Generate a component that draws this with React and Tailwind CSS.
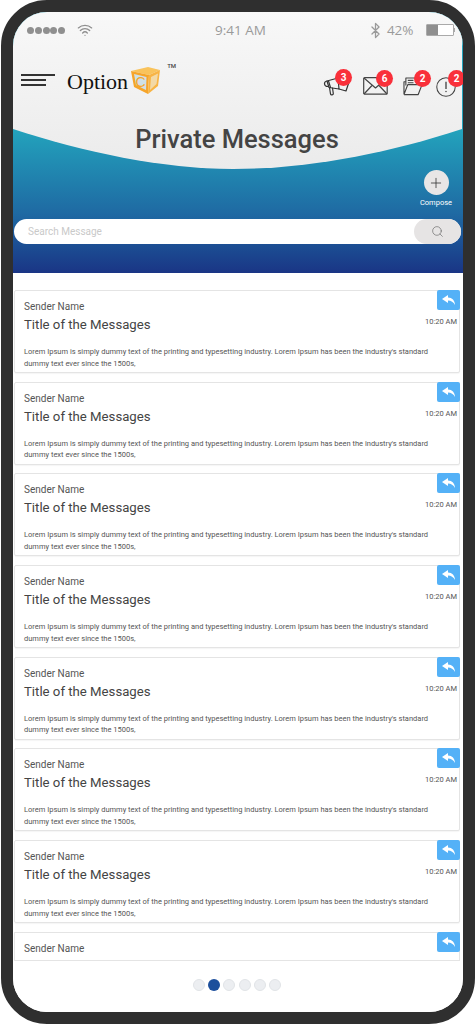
import React from 'react';
import { Search, Plus, Bluetooth, Wifi } from 'lucide-react';

const Badge = ({ n, className }) => (
  <span className={`absolute flex h-[17px] w-[17px] items-center justify-center rounded-full bg-[#f9303a] text-[10px] font-bold leading-none text-white ${className}`}>
    {n}
  </span>
);

const Cube = () => (
  <svg width="30" height="28" viewBox="0 0 30 28">
    <path d="M0 4 L17 0 L29 3 L18 8 Z" fill="#f9c35c" />
    <path d="M0 4 L18 8 L17 27 L3 20 Z" fill="#f6a52a" />
    <path d="M18 8 L29 3 L27 19 L17 27 Z" fill="#f8b444" />
    <path d="M3 7 L15.5 10 L15 23 L5 18 Z" fill="#cfe0e6" />
    <path d="M20 10 L27 6.5 L25.5 17 L19 23 Z" fill="#f3d9a6" />
    <text x="4.5" y="20" fontSize="14" fontFamily="Liberation Sans, sans-serif" fill="#f6a52a">C</text>
  </svg>
);

const Megaphone = () => (
  <svg width="28" height="24" viewBox="0 0 28 24" fill="none" stroke="#333" strokeWidth="1.2" strokeLinejoin="round" strokeLinecap="round">
    <path d="M4 7 L15 4 L16 15 L6 13.5 Z" />
    <path d="M4 7 C0.5 7.5 0.5 12.5 5 12.5" />
    <path d="M6.500 13.5 L7.500 20 C8 21.500 10.500 21 10.300 19.500 L9.500 14" />
    <path d="M16 15 L23 17 L26 8" />
    <path d="M5.500 7 L7.500 13.5" />
  </svg>
);

const Envelope = () => (
  <svg width="25" height="18" viewBox="0 0 25 18" fill="none" stroke="#444" strokeWidth="1.2" strokeLinejoin="round">
    <rect x="0.7" y="0.7" width="23.5" height="16.5" rx="1" />
    <path d="M1 1 L12.5 11 L24 1" />
    <path d="M1 17 L9 8.5 M24 17 L16 8.5" />
  </svg>
);

const Folder = () => (
  <svg width="20" height="19" viewBox="0 0 21 20" fill="none" stroke="#444" strokeWidth="1.2" strokeLinejoin="round">
    <path d="M3 9 V1 H14 V6" />
    <path d="M5 3.5 H11 M5 6 H11" />
    <path d="M1 18.5 V5 H3 M1 18.5 H16 L20 8 H5 L1 18.5" />
  </svg>
);

const Alert = () => (
  <svg width="20" height="20" viewBox="0 0 21 21" fill="none" stroke="#444" strokeWidth="1.1">
    <circle cx="10.5" cy="10.5" r="9.7" />
    <path d="M10.5 5 V12.5" strokeWidth="1.4" />
    <circle cx="10.5" cy="15.3" r="0.8" fill="#444" stroke="none" />
  </svg>
);

const MessageCard = ({ clipped }) => (
  <div className={`relative shrink-0 border border-[#e4e4e4] bg-white pl-[9px] pr-[24px] pt-[9px] ${clipped ? 'h-[29px] overflow-visible' : 'h-[83px] rounded-[2px] shadow-[0_1px_1px_rgba(0,0,0,0.04)]'}`}>
    <button className="absolute right-[-1px] top-[-1px] flex h-[20px] w-[23px] items-center justify-center rounded-[2px] bg-[#54b1f7]">
      <svg width="14" height="10" viewBox="0 0 14 10" fill="#fff">
        <path d="M6 0 L0 4 L6 8 V5.5 C9 5.5 11.5 7 13 10 C13 5.5 10 2.5 6 2.5 Z" />
      </svg>
    </button>
    <div className="text-[10px] leading-[13px] text-[#555]">Sender Name</div>
    {!clipped && (
      <>
        <div className="mt-[3px] flex items-start justify-between">
          <span className="text-[13.2px] leading-[18px] text-[#444]">Title of the Messages</span>
          <span className="mr-[-22px] mt-[1px] text-[7.5px] leading-[10px] text-[#555]">10:20 AM</span>
        </div>
        <p className="mt-[12px] text-[7.5px] leading-[11.5px] text-[#555]">
          Lorem Ipsum is simply dummy text of the printing and typesetting industry. Lorem Ipsum has been the industry's standard dummy text ever since the 1500s,
        </p>
      </>
    )}
  </div>
);

export default function App() {
  return (
    <div className="h-[1024px] w-[475px] overflow-hidden bg-white font-['Roboto',sans-serif]">
      <div className="ml-[1px] flex h-[1024px] w-[474px] flex-col overflow-hidden rounded-[46px] border-[12.5px] border-[#2f2f2f]">
        <header className="relative h-[261px] shrink-0 bg-gradient-to-b from-[#23a3bc] from-45% via-[#1f6aa3] via-77% to-[#1a3585]">
          <svg className="absolute inset-x-0 top-0" width="449" height="158" viewBox="0 0 449 158" preserveAspectRatio="none">
            <defs>
              <linearGradient id="top" x1="0" y1="0" x2="0" y2="1">
                <stop offset="0" stopColor="#f8f8f8" />
                <stop offset="1" stopColor="#ebebeb" />
              </linearGradient>
            </defs>
            <path d="M0 0 H449 V117 C370 143 290 157 220 157 C150 157 70 140 0 117 Z" fill="url(#top)" />
          </svg>

          <div className="relative flex h-[36px] items-center justify-between pl-[14px] pr-[8px] text-[14px] text-[#9a9a9a]">
            <div className="flex items-center gap-[12px]">
              <div className="flex gap-[0.8px]">
                <i className="h-[7px] w-[7px] rounded-full bg-[#8f8f8f]" />
                <i className="h-[7px] w-[7px] rounded-full bg-[#8f8f8f]" />
                <i className="h-[7px] w-[7px] rounded-full bg-[#8f8f8f]" />
                <i className="h-[7px] w-[7px] rounded-full bg-[#8f8f8f]" />
                <i className="h-[7px] w-[7px] rounded-full bg-[#8f8f8f]" />
              </div>
              <Wifi size={16} strokeWidth={2} className="text-[#8f8f8f]" />
            </div>
            <span className="absolute left-[202px] font-['Open_Sans',sans-serif] text-[13.5px]">9:41 AM</span>
            <div className="flex items-center gap-[3px]">
              <Bluetooth size={17} strokeWidth={1.8} />
              <span className="mr-[9px] font-['Open_Sans',sans-serif] text-[13.5px]">42%</span>
              <div className="flex items-center">
                <div className="flex h-[12px] w-[28px] rounded-[1px] border border-[#aaa] bg-white">
                  <div className="w-[11px] bg-[#8f8f8f]" />
                </div>
                <div className="h-[4px] w-[1.5px] bg-[#aaa]" />
              </div>
            </div>
          </div>

          <div className="relative mt-[16px] flex h-[59px] items-start pl-[8px]">
            <div className="mt-[10px] flex w-[34px] flex-col gap-[3.5px]">
              <i className="h-[1.5px] w-[34px] bg-[#333]" />
              <i className="h-[1.5px] w-[25px] bg-[#333]" />
              <i className="h-[1.5px] w-[25px] bg-[#333]" />
            </div>
            <span className="ml-[12px] mt-[5px] font-['Liberation_Serif',serif] text-[22px] leading-[26px] text-[#111]">Option</span>
            <span className="ml-[3px] mt-[3px]"><Cube /></span>
            <span className="ml-[6px] mt-[-3px] text-[6px] font-medium text-[#444]">TM</span>

            <div className="absolute right-[2px] top-[9px] flex items-start">
              <div className="relative mt-[1px] h-[26px] w-[40px]">
                <Megaphone />
                <Badge n="3" className="left-[12px] top-[-5px]" />
              </div>
              <div className="relative mt-[4px] h-[20px] w-[40px]">
                <Envelope />
                <Badge n="6" className="left-[13px] top-[-7px]" />
              </div>
              <div className="relative mt-[4px] h-[20px] w-[33px]">
                <Folder />
                <Badge n="2" className="left-[11px] top-[-7px]" />
              </div>
              <div className="relative mt-[4px] h-[20px] w-[25px]">
                <Alert />
                <Badge n="2" className="left-[12px] top-[-7px]" />
              </div>
            </div>
          </div>

          <h1 className="relative mt-[-1px] pr-[2px] text-center text-[25.5px] font-medium leading-[34px] text-[#444]">Private Messages</h1>

          <div className="relative mt-[14px] flex justify-end pr-[10px]">
            <div className="flex w-[34px] flex-col items-center">
              <div className="flex h-[25px] w-[25px] items-center justify-center rounded-full bg-[#e8e6e6]">
                <Plus size={16} strokeWidth={1.2} className="text-[#333]" />
              </div>
              <span className="mt-[3px] text-[7.5px] leading-[10px] text-white">Compose</span>
            </div>
          </div>

          <div className="relative ml-[1px] mr-[2px] mt-[11px] flex h-[25px] items-center rounded-full bg-white pl-[14px]">
            <span className="text-[10px] text-[#c9c9c9]">Search Message</span>
            <div className="absolute right-0 top-0 flex h-[25px] w-[47px] items-center justify-center rounded-full bg-[#e6e4e4]">
              <Search size={13} strokeWidth={1.2} className="text-[#666]" />
            </div>
          </div>
        </header>

        <main className="flex flex-1 flex-col gap-[8.7px] overflow-hidden bg-white pl-[1px] pr-[3px] pt-[17px]">
          <MessageCard />
          <MessageCard />
          <MessageCard />
          <MessageCard />
          <MessageCard />
          <MessageCard />
          <MessageCard />
          <MessageCard clipped />
          <div className="mt-[9px] flex justify-center gap-[3.3px]">
            <i className="h-[12px] w-[12px] rounded-full border border-[#e0e3e6] bg-[#eceef1]" />
            <i className="h-[12px] w-[12px] rounded-full bg-[#1c4f9c]" />
            <i className="h-[12px] w-[12px] rounded-full border border-[#e0e3e6] bg-[#eceef1]" />
            <i className="h-[12px] w-[12px] rounded-full border border-[#e0e3e6] bg-[#eceef1]" />
            <i className="h-[12px] w-[12px] rounded-full border border-[#e0e3e6] bg-[#eceef1]" />
            <i className="h-[12px] w-[12px] rounded-full border border-[#e0e3e6] bg-[#eceef1]" />
          </div>
        </main>
      </div>
    </div>
  );
}
